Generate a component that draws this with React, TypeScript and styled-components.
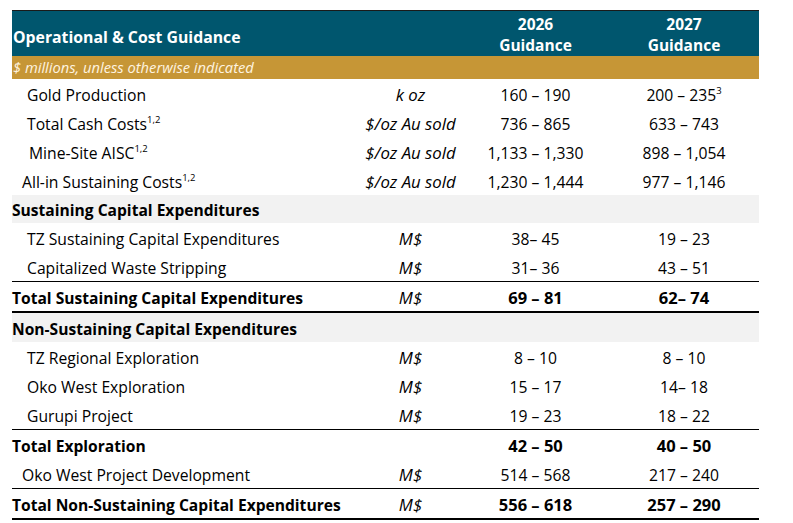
import React from 'react';
import styled, { createGlobalStyle } from 'styled-components';

const GlobalStyle = createGlobalStyle`
  body {
    margin: 0;
    background: #ffffff;
    font-family: 'Open Sans', 'Noto Sans', sans-serif;
    color: #000000;
  }
`;

const Page = styled.div`
  padding: 10px 0 0 12px;
`;

const Table = styled.div`
  width: 747px;
`;

const COLS = '353px 97px 147px 150px';

const HeaderRow = styled.div`
  display: grid;
  grid-template-columns: ${COLS};
  height: 45px;
  border-top: 1px solid #1a1a1a;
  background: #00566e;
  color: #ffffff;
  font-weight: 700;
  font-size: 15.5px;
`;

const HeaderTitle = styled.div`
  grid-column: 1 / 3;
  align-self: end;
  padding: 0 0 8px 1px;
  font-size: 15.8px;
`;

const HeaderYear = styled.div`
  text-align: center;
  line-height: 21px;
  padding-top: 3px;
`;

const NoteRow = styled.div`
  height: 23px;
  background: #c69636;
  color: #fff4e0;
  font-style: italic;
  font-size: 14.7px;
  line-height: 23px;
  padding-left: 1px;
`;

const Row = styled.div<{ $shade?: boolean; $rule?: 'thin' | 'thick'; $h?: number }>`
  display: grid;
  grid-template-columns: ${COLS};
  align-items: center;
  height: ${p => (p.$h ?? 29) - 2}px;
  padding-top: 2px;
  background: ${p => (p.$shade ? '#f2f2f2' : 'transparent')};
  border-bottom: ${p =>
    p.$rule === 'thick' ? '2.5px solid #000' : p.$rule === 'thin' ? '1px solid #000' : 'none'};
  font-size: 15.5px;
`;

const Label = styled.div<{ $indent?: number; $bold?: boolean }>`
  padding-left: ${p => p.$indent ?? 0}px;
  font-weight: ${p => (p.$bold ? 700 : 400)};
  font-size: ${p => (p.$bold ? 15.6 : 15.7)}px;
  white-space: nowrap;
`;

const Unit = styled.div`
  text-align: center;
  font-style: italic;
  font-size: 16.8px;
  padding-right: 6px;
`;

const Value = styled.div<{ $bold?: boolean }>`
  text-align: center;
  font-weight: ${p => (p.$bold ? 700 : 400)};
  font-size: ${p => (p.$bold ? 16.5 : 15.7)}px;
`;

const Sup = styled.sup`
  font-size: 9.5px;
  vertical-align: 7px;
  line-height: 0;
`;

type Line = {
  label: string;
  sup?: string;
  indent?: number;
  unit?: string;
  a?: string;
  b?: string;
  bSup?: string;
  bold?: boolean;
  shade?: boolean;
  rule?: 'thin' | 'thick';
  h?: number;
};

const lines: Line[] = [
  { label: 'Gold Production', indent: 15, unit: 'k oz', a: '160 – 190', b: '200 – 235', bSup: '3' },
  { label: 'Total Cash Costs', sup: '1,2', indent: 15, unit: '$/oz Au sold', a: '736 – 865', b: '633 – 743' },
  { label: 'Mine-Site AISC', sup: '1,2', indent: 17, unit: '$/oz Au sold', a: '1,133 – 1,330', b: '898 – 1,054' },
  { label: 'All-in Sustaining Costs', sup: '1,2', indent: 10, unit: '$/oz Au sold', a: '1,230 – 1,444', b: '977 – 1,146' },
  { label: 'Sustaining Capital Expenditures', bold: true, shade: true, h: 28 },
  { label: 'TZ Sustaining Capital Expenditures', indent: 15, unit: 'M$', a: '38– 45', b: '19 – 23' },
  { label: 'Capitalized Waste Stripping', indent: 15, unit: 'M$', a: '31– 36', b: '43 – 51', rule: 'thin' },
  { label: 'Total Sustaining Capital Expenditures', bold: true, unit: 'M$', a: '69 – 81', b: '62– 74', rule: 'thick' },
  { label: 'Non-Sustaining Capital Expenditures', bold: true, shade: true },
  { label: 'TZ Regional Exploration', indent: 15, unit: 'M$', a: '8 – 10', b: '8 – 10' },
  { label: 'Oko West Exploration', indent: 15, unit: 'M$', a: '15 – 17', b: '14– 18' },
  { label: 'Gurupi Project', indent: 15, unit: 'M$', a: '19 – 23', b: '18 – 22', rule: 'thin' },
  { label: 'Total Exploration', bold: true, a: '42 – 50', b: '40 – 50' },
  { label: 'Oko West Project Development', indent: 10, unit: 'M$', a: '514 – 568', b: '217 – 240', rule: 'thin' },
  { label: 'Total Non-Sustaining Capital Expenditures', bold: true, unit: 'M$', a: '556 – 618', b: '257 – 290', rule: 'thick' },
];

const App = () => {
  return (
    <Page>
      <GlobalStyle />
      <Table>
        <HeaderRow>
          <HeaderTitle>Operational &amp; Cost Guidance</HeaderTitle>
          <HeaderYear>
            2026
            <br />
            Guidance
          </HeaderYear>
          <HeaderYear>
            2027
            <br />
            Guidance
          </HeaderYear>
        </HeaderRow>
        <NoteRow>$ millions, unless otherwise indicated</NoteRow>
        {lines.map(l => (
          <Row key={l.label} $shade={l.shade} $rule={l.rule} $h={l.h}>
            <Label $indent={l.indent} $bold={l.bold}>
              {l.label}
              {l.sup && <Sup>{l.sup}</Sup>}
            </Label>
            <Unit>{l.unit}</Unit>
            <Value $bold={l.bold}>{l.a}</Value>
            <Value $bold={l.bold}>
              {l.b}
              {l.bSup && <Sup>{l.bSup}</Sup>}
            </Value>
          </Row>
        ))}
      </Table>
    </Page>
  );
};

export default App;
